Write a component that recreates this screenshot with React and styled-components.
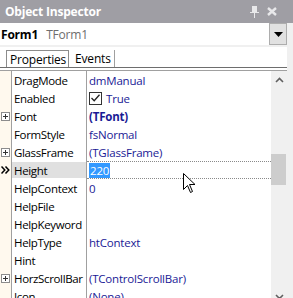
import styled, { createGlobalStyle } from 'styled-components'

const GlobalStyle = createGlobalStyle`
    html, body {
        margin: 0;
        padding: 0;
        background: #f0f0f0;
        font-family: 'Open Sans', 'Noto Sans', sans-serif;
        font-size: 11.5px;
    }
`

const Window = styled.div`
    width: 293px;
    height: 298px;
    overflow: hidden;
    position: relative;
    display: flex;
    flex-direction: column;
`
const TitleBar = styled.div`
    height: 23px;
    flex: none;
    background: #9f9ea4;
    display: flex;
    align-items: center;
    padding: 0 16px 0 5px;
    color: #ffffff;
    font-weight: bold;
    font-size: 12px;
    letter-spacing: -0.2px;
`
const TitleText = styled.div`
    flex: 1;
`
const TitleIcons = styled.div`
    display: flex;
    align-items: center;
    gap: 8px;
`
const Body = styled.div`
    flex: 1;
    display: flex;
`
const Panel = styled.div`
    width: 287px;
    display: flex;
    flex-direction: column;
    background: #f0f0f0;
`
const Combo = styled.div`
    height: 22px;
    background: #ffffff;
    display: flex;
    align-items: center;
    padding-left: 1px;
    font-size: 12px;
    letter-spacing: -0.2px;
`
const ComboName = styled.span`
    font-weight: bold;
    color: #000;
`
const ComboType = styled.span`
    color: #6d6d6d;
    margin-left: 8px;
    flex: 1;
`
const DropButton = styled.div`
    width: 18px;
    height: 22px;
    background: #e1e1e1;
    border: 1px solid #adadad;
    box-sizing: border-box;
    display: flex;
    align-items: center;
    justify-content: center;
`
const TabStrip = styled.div`
    margin-top: 2px;
    height: 20px;
    background: #ffffff;
    display: flex;
    align-items: flex-end;
    padding-left: 6px;
    border-bottom: 1px solid #6e6e6e;
    font-size: 12px;
`
const Tab = styled.div`
    height: 17px;
    box-sizing: border-box;
    padding: 0 2px 0 3px;
    display: flex;
    align-items: center;
    color: #000;
    letter-spacing: -0.2px;
    border: ${(props) => (props.active ? '1px solid #8c8c8c' : 'none')};
    border-bottom: none;
    border-right: ${(props) => (props.active ? '1px solid #8c8c8c' : '1px solid #a0a0a0')};
    margin-right: ${(props) => (props.active ? '3px' : '0')};
    padding-right: ${(props) => (props.active ? '2px' : '3px')};
`
const TabGap = styled.div`
    height: 2px;
    background: #ffffff;
    border-bottom: 1px solid #a0a0a0;
`
const GridArea = styled.div`
    flex: 1;
    display: flex;
    background: #ffffff;
    min-height: 0;
`
const Grid = styled.div`
    flex: 1;
    display: flex;
    flex-direction: column;
    background: linear-gradient(to right, #fff9ee 0, #fff9ee 11px, #a0a0a0 11px, #a0a0a0 12px, #ffffff 12px, #ffffff 86px, #a0a0a0 86px, #a0a0a0 87px, #ffffff 87px);
    overflow: hidden;
`
const Row = styled.div`
    height: 18px;
    flex: none;
    display: grid;
    grid-template-columns: 12px 74px 1px 1fr;
    align-items: stretch;
    letter-spacing: -0.2px;
`
const Gutter = styled.div`
    display: flex;
    align-items: center;
    justify-content: center;
    padding-right: 1px;
`
const PlusBox = styled.div`
    width: 9px;
    height: 9px;
    box-sizing: border-box;
    border: 1px solid #8c8c8c;
    background: #fff;
    position: relative;
    &::before {
        content: '';
        position: absolute;
        left: 1px;
        top: 3px;
        width: 5px;
        height: 1px;
        background: #333;
    }
    &::after {
        content: '';
        position: absolute;
        left: 3px;
        top: 1px;
        width: 1px;
        height: 5px;
        background: #333;
    }
`
const NameCell = styled.div`
    display: flex;
    align-items: center;
    padding-left: 2px;
    color: #000;
    white-space: nowrap;
    overflow: hidden;
    letter-spacing: -0.35px;
    background: ${(props) => (props.selected ? '#e0e0e0' : 'transparent')};
    margin: ${(props) => (props.selected ? '1px 0' : '0')};
`
const Sep = styled.div``
const ValueCell = styled.div`
    display: flex;
    align-items: center;
    padding-left: 2px;
    color: #1a1a95;
    font-weight: ${(props) => (props.bold ? 'bold' : 'normal')};
    white-space: nowrap;
    overflow: hidden;
    border-top: ${(props) => (props.editing ? '1px dotted #8a8a8a' : 'none')};
    border-bottom: ${(props) => (props.editing ? '1px dotted #8a8a8a' : 'none')};
`
const Selected = styled.span`
    background: #3399ff;
    color: #fff;
    padding: 0 1px;
    line-height: 15px;
`
const CheckBox = styled.div`
    width: 13px;
    height: 13px;
    box-sizing: border-box;
    border: 1px solid #333;
    margin-right: 4px;
    display: flex;
    align-items: center;
    justify-content: center;
`
const ScrollBar = styled.div`
    width: 16px;
    flex: none;
    background: #f0f0f0;
    display: flex;
    flex-direction: column;
    align-items: center;
`
const ScrollArrow = styled.div`
    height: 17px;
    display: flex;
    align-items: center;
    justify-content: center;
`
const Track = styled.div`
    flex: 1;
    width: 100%;
    display: flex;
    flex-direction: column;
`
const Thumb = styled.div`
    margin-top: 66px;
    height: 31px;
    width: 15px;
    background: #cdcdcd;
`
const Filler = styled.div`
    width: 6px;
    background: #f0f0f0;
`
const Cursor = styled.svg`
    position: absolute;
    left: 183px;
    top: 173px;
`

const rows = [
    { name: 'DragMode', value: 'dmManual' },
    { name: 'Enabled', value: 'True', check: true },
    { name: 'Font', value: '(TFont)', plus: true, bold: true },
    { name: 'FormStyle', value: 'fsNormal' },
    { name: 'GlassFrame', value: '(TGlassFrame)', plus: true },
    { name: 'Height', value: '220', selected: true },
    { name: 'HelpContext', value: '0' },
    { name: 'HelpFile', value: '' },
    { name: 'HelpKeyword', value: '' },
    { name: 'HelpType', value: 'htContext' },
    { name: 'Hint', value: '' },
    { name: 'HorzScrollBar', value: '(TControlScrollBar)', plus: true },
    { name: 'Icon', value: '(None)' },
]

function Chevron({ down }) {
    return (
        <svg width="9" height="6" viewBox="0 0 9 6">
            <path
                d={down ? 'M1 1 L4.5 4.5 L8 1' : 'M1 5 L4.5 1.5 L8 5'}
                stroke="#606060"
                strokeWidth="1.6"
                fill="none"
            />
        </svg>
    )
}

function CurrentMarker() {
    return (
        <svg width="10" height="8" viewBox="0 0 10 8">
            <path d="M0.5 0.5 L3.8 4 L0.5 7.5 M4.5 0.5 L7.8 4 L4.5 7.5" stroke="#000" strokeWidth="1.5" fill="none" />
        </svg>
    )
}

function App() {
    return (
        <Window>
            <GlobalStyle />
            <TitleBar>
                <TitleText>Object Inspector</TitleText>
                <TitleIcons>
                    <svg width="9" height="12" viewBox="0 0 9 12">
                        <rect x="2" y="0" width="5" height="6" fill="#e8e8ea" />
                        <rect x="0" y="6" width="9" height="1" fill="#e8e8ea" />
                        <rect x="4" y="7" width="1" height="5" fill="#e8e8ea" />
                    </svg>
                    <svg width="10" height="9" viewBox="0 0 10 9">
                        <path d="M1 1 L9 8 M9 1 L1 8" stroke="#e8e8ea" strokeWidth="2.4" />
                    </svg>
                </TitleIcons>
            </TitleBar>
            <Body>
                <Panel>
                    <Combo>
                        <ComboName>Form1</ComboName>
                        <ComboType>TForm1</ComboType>
                        <DropButton>
                            <svg width="9" height="5" viewBox="0 0 9 5">
                                <path d="M0 0 H9 L4.5 5 Z" fill="#000" />
                            </svg>
                        </DropButton>
                    </Combo>
                    <TabStrip>
                        <Tab active>Properties</Tab>
                        <Tab>Events</Tab>
                    </TabStrip>
                    <TabGap />
                    <GridArea>
                        <Grid>
                            {rows.map((row) => (
                                <Row key={row.name}>
                                    <Gutter>
                                        {row.plus && <PlusBox />}
                                        {row.selected && <CurrentMarker />}
                                    </Gutter>
                                    <NameCell selected={row.selected}>{row.name}</NameCell>
                                    <Sep />
                                    <ValueCell bold={row.bold} editing={row.selected}>
                                        {row.check && (
                                            <CheckBox>
                                                <svg width="9" height="8" viewBox="0 0 9 8">
                                                    <path d="M0.5 4 L3.2 6.8 L8.5 0.8" stroke="#222" strokeWidth="1.3" fill="none" />
                                                </svg>
                                            </CheckBox>
                                        )}
                                        {row.selected ? <Selected>{row.value}</Selected> : row.value}
                                    </ValueCell>
                                </Row>
                            ))}
                        </Grid>
                        <ScrollBar>
                            <ScrollArrow>
                                <Chevron />
                            </ScrollArrow>
                            <Track>
                                <Thumb />
                            </Track>
                            <ScrollArrow>
                                <Chevron down />
                            </ScrollArrow>
                        </ScrollBar>
                    </GridArea>
                </Panel>
                <Filler />
            </Body>
            <Cursor width="13" height="21" viewBox="0 0 13 21">
                <path
                    d="M0.5 0.5 V16.5 L4.5 12.5 L7.5 19.5 L9.5 18.5 L6.5 11.5 H12 Z"
                    fill="#fff"
                    stroke="#000"
                    strokeWidth="1"
                />
            </Cursor>
        </Window>
    )
}

export default App
